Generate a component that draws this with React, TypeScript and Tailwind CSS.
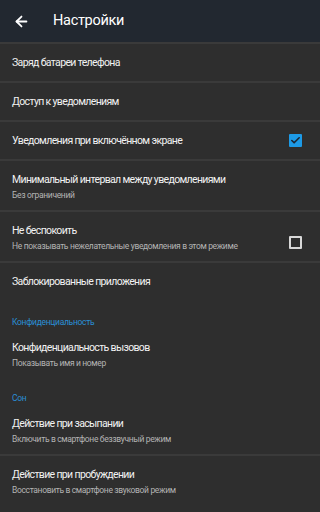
import { ArrowLeft, Check } from "lucide-react";

type Item = {
  title: string;
  subtitle?: string;
  check?: boolean;
  divider?: boolean;
};

function Row({ title, subtitle, check, divider = true }: Item) {
  return (
    <div className={divider ? "border-b-2 border-[#3a3a3a]" : ""}>
      <div
        className={
          "flex px-3 " +
          (subtitle ? "h-[49px] items-start pt-[11px]" : "h-[37px] items-center")
        }
      >
        <div className="min-w-0 flex-1">
          <div className="text-[10.5px] leading-[16px] tracking-[-0.65px] text-[#f2f2f2]">
            {title}
          </div>
          {subtitle ? (
            <div className="text-[8.5px] leading-[14px] tracking-[-0.35px] text-[#b4b4b4]">
              {subtitle}
            </div>
          ) : null}
        </div>
        {check !== undefined ? (
          <div className="flex h-[28px] items-center self-center">
            {check ? (
              <div className="mr-[6px] flex h-[13px] w-[13px] items-center justify-center rounded-[1px] bg-[#1d9ae6]">
                <Check className="h-[11px] w-[11px] text-[#1c2430]" strokeWidth={3.5} />
              </div>
            ) : (
              <div className="mr-[6px] h-[13px] w-[13px] rounded-[1px] border-2 border-[#d8d8d8]" />
            )}
          </div>
        ) : null}
      </div>
    </div>
  );
}

function Category({ label, top }: { label: string; top: string }) {
  return (
    <div className={"px-3 pb-[1px] text-[8.5px] leading-[12px] tracking-[-0.3px] text-[#2a8fd6] " + top}>
      {label}
    </div>
  );
}

export default function App() {
  return (
    <div
      className="flex h-[512px] w-[320px] flex-col overflow-hidden bg-[#2e2e2e]"
      style={{ fontFamily: "Roboto, 'Noto Sans', sans-serif" }}
    >
      <header className="flex h-[42px] shrink-0 items-center bg-[#222830]">
        <ArrowLeft className="ml-[13px] h-[17px] w-[17px] text-white" strokeWidth={2.5} />
        <span className="ml-[23px] text-[14.5px] tracking-[-0.3px] text-white">Настройки</span>
      </header>
      <div className="h-[2px] shrink-0 bg-[#3a3a3a]" />
      <Row title="Заряд батареи телефона" />
      <Row title="Доступ к уведомлениям" />
      <Row title="Уведомления при включённом экране" check={true} />
      <Row title="Минимальный интервал между уведомлениями" subtitle="Без ограничений" />
      <Row
        title="Не беспокоить"
        subtitle="Не показывать нежелательные уведомления в этом режиме"
        check={false}
      />
      <Row title="Заблокированные приложения" divider={false} />
      <Category label="Конфиденциальность" top="pt-[16px]" />
      <Row title="Конфиденциальность вызовов" subtitle="Показывать имя и номер" divider={false} />
      <Category label="Сон" top="pt-[14px]" />
      <Row title="Действие при засыпании" subtitle="Включить в смартфоне беззвучный режим" />
      <Row title="Действие при пробуждении" subtitle="Восстановить в смартфоне звуковой режим" divider={false} />
    </div>
  );
}
